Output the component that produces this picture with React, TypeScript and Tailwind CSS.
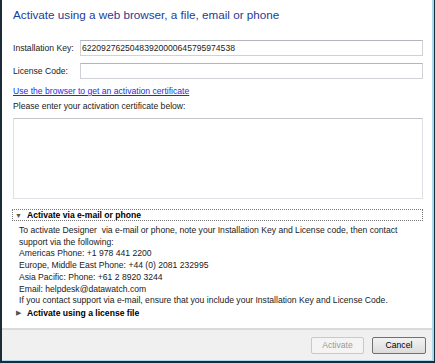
export default function App() {
  const font = { fontFamily: '"Liberation Sans", Arial, sans-serif' }
  return (
    <div
      className="w-[435px] h-[363px] overflow-hidden border-l-2 border-r border-b-2 border-[#1b2c36] bg-white"
      style={font}
    >
      <div className="flex h-full flex-col border-r-2 border-b border-[#a9d9ef]">
        <div className="flex-1 pl-[11px] pr-[9px] text-[8.6px] text-[#1a1a1a]">
          <div className="pt-[7px] text-[11.7px] leading-[16px] text-[#1e3b99]">
            Activate using a web browser, a file, email or phone
          </div>

          <div className="mt-[17px] flex items-center">
            <div className="w-[67px]">Installation Key:</div>
            <div className="flex h-[16px] flex-1 items-center border border-[#cfd3d8] border-t-[#b2b5bb] px-[1px]">
              62209276250483920000645795974538
            </div>
          </div>
          <div className="mt-[7px] flex items-center">
            <div className="w-[67px]">License Code:</div>
            <div className="h-[16px] flex-1 border border-[#cfd3d8] border-t-[#b2b5bb]" />
          </div>

          <div className="mt-[7px] leading-[11px] text-[#1c2ee0] underline">
            Use the browser to get an activation certificate
          </div>
          <div className="mt-[4px] leading-[11px]">Please enter your activation certificate below:</div>

          <div className="mt-[6px] h-[81px] border border-[#dde1e6] border-t-[#c2c5ca]" />

          <div className="mt-[10px] -ml-[1px] flex h-[12px] items-center border border-dotted border-[#777] pl-[2px]">
            <span className="text-[7px] text-[#555] leading-none">▼</span>
            <span className="ml-[5px] font-bold text-black">Activate via e-mail or phone</span>
          </div>

          <div className="mt-[4px] pl-[6px] leading-[11.7px]">
            <div>To activate Designer&nbsp; via e-mail or phone, note your Installation Key and License code, then contact</div>
            <div>support via the following:</div>
            <div>Americas Phone: +1 978 441 2200</div>
            <div>Europe, Middle East Phone: +44 (0) 2081 232995</div>
            <div>Asia Pacific: Phone: +61 2 8920 3244</div>
            <div>Email: helpdesk@datawatch.com</div>
            <div>If you contact support via e-mail, ensure that you include your Installation Key and License Code.</div>
          </div>
          <div className="flex items-center pl-[3px] leading-[12px]">
            <span className="text-[7px] text-[#555] leading-none">▶</span>
            <span className="ml-[6px] font-bold text-black">Activate using a license file</span>
          </div>
        </div>

        <div className="flex h-[32px] items-center justify-end gap-[8px] border-t-2 border-[#dadada] bg-[#f0f0f0] pr-[6px] text-[8.6px]">
          <div className="flex h-[17px] w-[53px] items-center justify-center rounded-[2px] border border-[#c9c9c9] bg-[#f4f4f4] text-[#9a9a9a]">
            Activate
          </div>
          <div className="flex h-[17px] w-[54px] items-center justify-center rounded-[2px] border border-[#707070] bg-gradient-to-b from-[#f2f2f2] to-[#dcdcdc] text-black">
            Cancel
          </div>
        </div>
      </div>
    </div>
  )
}
